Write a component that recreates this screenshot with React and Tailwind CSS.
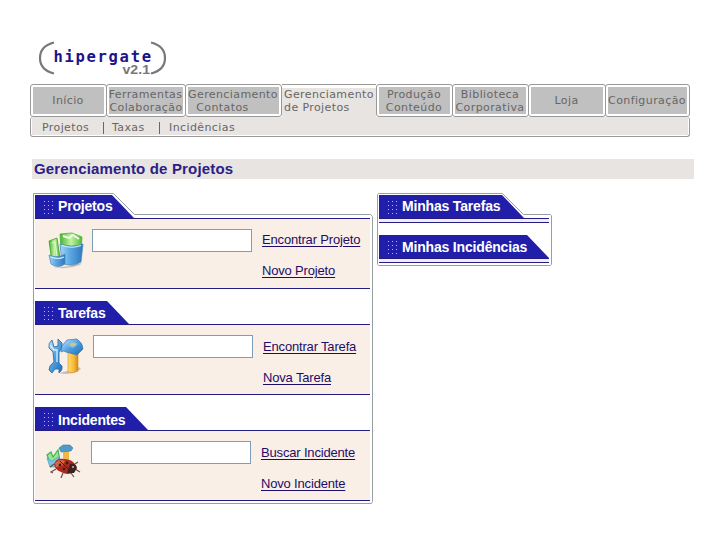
const tabs = [
  { lines: ['Início'], box: 'w-[77px]' },
  { lines: ['Ferramentas', 'Colaboração'], box: 'w-[80px] -ml-px' },
  { lines: ['Gerenciamento', 'Contatos'], box: 'w-[97px] -ml-px', second: 'pr-[22px]' },
  { lines: ['Gerenciamento', 'de Projetos'], box: 'w-[94px]', active: true },
  { lines: ['Produção', 'Conteúdo'], box: 'w-[77px]', second: 'pr-px' },
  { lines: ['Biblioteca', 'Corporativa'], box: 'w-[77px] -ml-px', second: 'pr-px' },
  { lines: ['Loja'], box: 'w-[78px] -ml-px' },
  { lines: ['Configuração'], box: 'w-[85px] -ml-px' },
];

function Logo() {
  return (
    <svg width="130" height="36" viewBox="38 40 130 36" className="block">
      <path d="M54 42.5Q40 46 40 58T54 73.5" fill="none" stroke="#77777d" strokeWidth="2.2" />
      <path d="M151 42.5Q165 46 165 58T151 73.5" fill="none" stroke="#77777d" strokeWidth="2.2" />
      <text x="53.5" y="61.5" textLength="97.5" lengthAdjust="spacing" fontFamily="DejaVu Sans Mono, monospace" fontWeight="700" fontSize="15.5" fill="#1a148c">hipergate</text>
      <text x="122.5" y="74" textLength="27.5" lengthAdjust="spacingAndGlyphs" fontFamily="Liberation Sans, sans-serif" fontWeight="700" fontSize="12" fill="#77777d">v2.1</text>
    </svg>
  );
}

function Tab({ lines, box, active, second = '' }) {
  if (active) {
    return (
      <div className={`${box} h-[33px] border-t border-[#999] bg-white pt-[3px]`}>
        <div className="h-full bg-[#e8e4e1] pl-[2px] leading-[13px] whitespace-nowrap">
          {lines.map((l) => <div key={l}>{l}</div>)}
        </div>
      </div>
    );
  }
  return (
    <div className={`${box} h-[33px] rounded-[3px] border border-[#999] bg-white p-[2px]`}>
      <div className="flex h-full flex-col items-center justify-center bg-[#c0c0c0] leading-[13px] whitespace-nowrap">
        {lines.map((l, i) => <div key={l} className={i === 1 ? second : 'pr-px'}>{l}</div>)}
      </div>
    </div>
  );
}

function Header({ title, width, slant, lead = 'leading-[23px]' }) {
  return (
    <div className="relative h-[24px] border-b border-[#241c80]">
      <svg width={width} height="23" className="absolute top-0 left-0">
        <path d={`M0 0H${slant}L${slant + 22} 23H0Z`} fill="#211fa9" />
        {[0, 1, 2].map((c) =>
          [0, 1, 2, 3].map((r) => (
            <rect key={`${c}-${r}`} x={9 + c * 4} y={6 + r * 4} width="1" height="1" fill="#b9b9ef" />
          ))
        )}
      </svg>
      <div className={`relative pl-[23px] text-[14px] ${lead} font-bold tracking-[-0.18px] whitespace-nowrap text-white`}>{title}</div>
    </div>
  );
}

function FoldersIcon() {
  return (
    <svg width="37" height="37" viewBox="0 0 37 37">
      <defs>
        <linearGradient id="cup" x1="0" x2="1">
          <stop offset="0" stopColor="#a8d6f5" />
          <stop offset="0.4" stopColor="#5fabe4" />
          <stop offset="1" stopColor="#2f78bd" />
        </linearGradient>
        <linearGradient id="leaf" x1="0" x2="1">
          <stop offset="0" stopColor="#46b62f" />
          <stop offset="0.5" stopColor="#c3f3a4" />
          <stop offset="1" stopColor="#4dba35" />
        </linearGradient>
      </defs>
      <path d="M6 35Q20 38 33 33L35 31Q25 34 14 35Z" fill="#cbbdb5" />
      <path d="M2 9L10 6L13 26L5 30Z" fill="url(#leaf)" stroke="#38a22a" strokeWidth=".8" />
      <path d="M5 11L8 10L10 24" stroke="#d9f7c8" strokeWidth="1.2" fill="none" />
      <path d="M13 2L25 1L35 5L34 18L14 18Z" fill="url(#leaf)" stroke="#49b038" strokeWidth=".8" />
      <path d="M16 4L22 6L26 3L32 7" stroke="#effbe8" strokeWidth="2" fill="none" />
      <path d="M13 12Q25 16 36 12L34 30Q25 36 15 31Z" fill="url(#cup)" stroke="#4287bb" strokeWidth=".7" />
      <path d="M2 23Q10 27 18 22L18 32Q11 37 4 32Z" fill="url(#cup)" stroke="#4287bb" strokeWidth=".7" />
      <path d="M15 13.500Q25 17 34 13.500M4 25Q11 28 17 25" stroke="#d2eefe" strokeWidth="1.2" fill="none" />
    </svg>
  );
}

function ToolsIcon() {
  return (
    <svg width="37" height="37" viewBox="0 0 37 37">
      <defs>
        <linearGradient id="steel" x1="0" x2="1" y1="0" y2="1">
          <stop offset="0" stopColor="#c9eaff" />
          <stop offset="0.5" stopColor="#4f9fdf" />
          <stop offset="1" stopColor="#236bb3" />
        </linearGradient>
        <linearGradient id="handle" x1="0" x2="1">
          <stop offset="0" stopColor="#ffdc74" />
          <stop offset="0.6" stopColor="#f8b832" />
          <stop offset="1" stopColor="#cf8818" />
        </linearGradient>
      </defs>
      <path d="M12 35Q25 38 34 31L32 29L20 33Z" fill="#cbbdb5" />
      <path d="M21 13H31V33Q26 36 21 34Z" fill="url(#handle)" stroke="#d1922a" strokeWidth=".6" />
      <path d="M14 9L20 2L30 1Q36 5 36 11L30 17L19 14Q17 12 14 14Z" fill="url(#steel)" stroke="#3878b0" strokeWidth=".7" />
      <path d="M19 7L25 3L31 6L26 10Z" fill="#76bdf0" />
      <ellipse cx="26" cy="6.5" rx="3" ry="1.8" fill="#d9c27b" />
      <path d="M5 2Q1 5 2 10L6 14L7 24Q2 27 2 32L5 35L8 31L12 31L12 35Q16 32 15 28L12 25V14Q16 10 15 5L11 1L11 8L7 9Z" fill="url(#steel)" stroke="#2f72ac" strokeWidth=".9" />
      <path d="M3 7L7 12H10V24" stroke="#d7f0ff" strokeWidth="1.3" fill="none" />
    </svg>
  );
}

function BugIcon() {
  return (
    <svg width="37" height="37" viewBox="0 0 37 37">
      <path d="M1 11L5 8L7 13L12 6L14 17L5 21Z" fill="#9fe3a0" stroke="#3fb44a" strokeWidth="1.2" />
      <path d="M1 14L6 17L12 13L14 18L11 23H4Z" fill="#79c5e6" stroke="#459ec6" strokeWidth=".7" />
      <path d="M17 5H23V20H17Z" fill="#efb747" />
      <path d="M13 4L17 1H24L27 4L25 7L15 8Z" fill="#4e9bc9" stroke="#397ca7" strokeWidth=".6" />
      <path d="M8 20L4 23M10 25L5 28L7 29M17 29L15 34M25 29L28 33M29 25L34 28M29 20L32 18" stroke="#67504c" strokeWidth="1.2" fill="none" />
      <path d="M8 20Q10 14 18 15Q27 15 30 22L28 28Q22 32 15 28Q9 26 8 20Z" fill="#a62c20" />
      <path d="M9 19Q14 14 19 17L16 22L10 23Z" fill="#dd6544" />
      <path d="M24 20Q30 19 31 24L28 29L21 29Z" fill="#3e2020" />
      <path d="M14 17L24 27" stroke="#5a1712" />
      <circle cx="14" cy="21" r="1.4" fill="#421816" />
      <circle cx="21" cy="19" r="1.4" fill="#421816" />
      <circle cx="18" cy="25" r="1.3" fill="#421816" />
      <circle cx="27" cy="23" r="1" fill="#d9b9a9" />
    </svg>
  );
}

function Section({ title, slant, icon, find, create, pad, gap, lead, linkTop = 'pt-[13px]' }) {
  return (
    <section>
      <Header title={title} width="120" slant={slant} lead={lead} />
      <div className={`flex h-[70px] items-start border-b border-[#241c80] bg-[#f9efe6] ${pad}`}>
        <div className="mt-[13px] w-[37px] shrink-0">{icon}</div>
        <input aria-label={title} className={`mt-[10px] h-[23px] w-[160px] shrink-0 border border-[#7f9db9] bg-white outline-none ${gap}`} />
        <div className={`ml-[10px] flex flex-col items-start gap-[15px] text-[13px] leading-[16px] tracking-[-0.17px] whitespace-nowrap text-[#1d0d68] ${linkTop}`}>
          <a href="#" className="underline underline-offset-[2px]">{find}</a>
          <a href="#" className="underline underline-offset-[2px]">{create}</a>
        </div>
      </div>
    </section>
  );
}

export default function App() {
  return (
    <div className="h-[540px] w-[720px] overflow-hidden bg-white pt-[40px] font-['Liberation_Sans',Arial,sans-serif]">
      <div className="ml-[38px] h-[44px]"><Logo /></div>

      <nav className="ml-[30px] w-[660px] font-['DejaVu_Sans',Verdana,sans-serif] text-[11px] tracking-[0.4px] text-[#666]">
        <div className="flex">
          {tabs.map((t, i) => <Tab key={i} {...t} />)}
        </div>
        <div className="h-[20px] rounded-[3px] border border-t-0 border-[#999] bg-white px-px pb-px">
          <div className="flex h-full items-center bg-[#e8e4e1] pt-[4px] pl-[10px] leading-[14px]">
            <span className="w-[61px]">Projetos</span>
            <span className="h-[12px] w-px bg-[#666]" />
            <span className="w-[55px] pl-[8px]">Taxas</span>
            <span className="h-[12px] w-px bg-[#666]" />
            <span className="pl-[9px]">Incidências</span>
          </div>
        </div>
      </nav>

      <h1 className="mt-[22px] ml-[32px] h-[20px] w-[662px] bg-[#e8e4e1] pl-[2px] text-[15px] leading-[20px] font-bold tracking-[0.17px] text-[#2a2088]">
        Gerenciamento de Projetos
      </h1>

      <main className="mt-[14px] ml-[33px] flex items-start gap-[4px]">
        <div className="relative h-[311px] w-[340px] px-[2px] pt-[2px]">
          <svg width="340" height="311" className="pointer-events-none absolute top-0 left-0">
            <path d="M.5 308.500V.5H80.500L101.500 21.500H337.500L339.500 23.500V308.500L338.500 310.500H1.500Z" fill="none" stroke="#96a0a0" />
          </svg>
          <div className="relative flex w-[335px] flex-col gap-[12px]">
            <Section title="Projetos" slant={77} icon={<FoldersIcon />} find="Encontrar Projeto" create="Novo Projeto" pad="pl-[12px]" gap="ml-[8px]" lead="leading-[23px]" />
            <Section title="Tarefas" slant={72} icon={<ToolsIcon />} find="Encontrar Tarefa" create="Nova Tarefa" pad="pl-[12px]" gap="ml-[9px]" lead="leading-[25px]" linkTop="pt-[14px]" />
            <Section title="Incidentes" slant={91} icon={<BugIcon />} find="Buscar Incidente" create="Novo Incidente" pad="pl-[11px]" gap="ml-[8px]" lead="leading-[26px]" linkTop="pt-[14px]" />
          </div>
        </div>

        <div className="relative h-[73px] w-[175px] pt-[2px] pl-[2px]">
          <svg width="175" height="73" className="pointer-events-none absolute top-0 left-0">
            <path d="M.5 71.500V1.500L1.500 .5H125.500L146.500 21.500H173.500L174.500 22.500V71.500L173.500 72.500H1.500Z" fill="none" stroke="#96a0a0" />
          </svg>
          <div className="relative flex w-[170px] flex-col gap-[12px]">
            <div>
              <Header title="Minhas Tarefas" width="170" slant={123} lead="leading-[23px]" />
              <div className="h-[4px] border-b border-[#241c80] bg-[#f1ecf8]" />
            </div>
            <div>
              <Header title="Minhas Incidências" width="170" slant={148} lead="leading-[25px]" />
              <div className="h-[4px] border-b border-[#241c80] bg-[#f1ecf8]" />
            </div>
          </div>
        </div>
      </main>
    </div>
  );
}
